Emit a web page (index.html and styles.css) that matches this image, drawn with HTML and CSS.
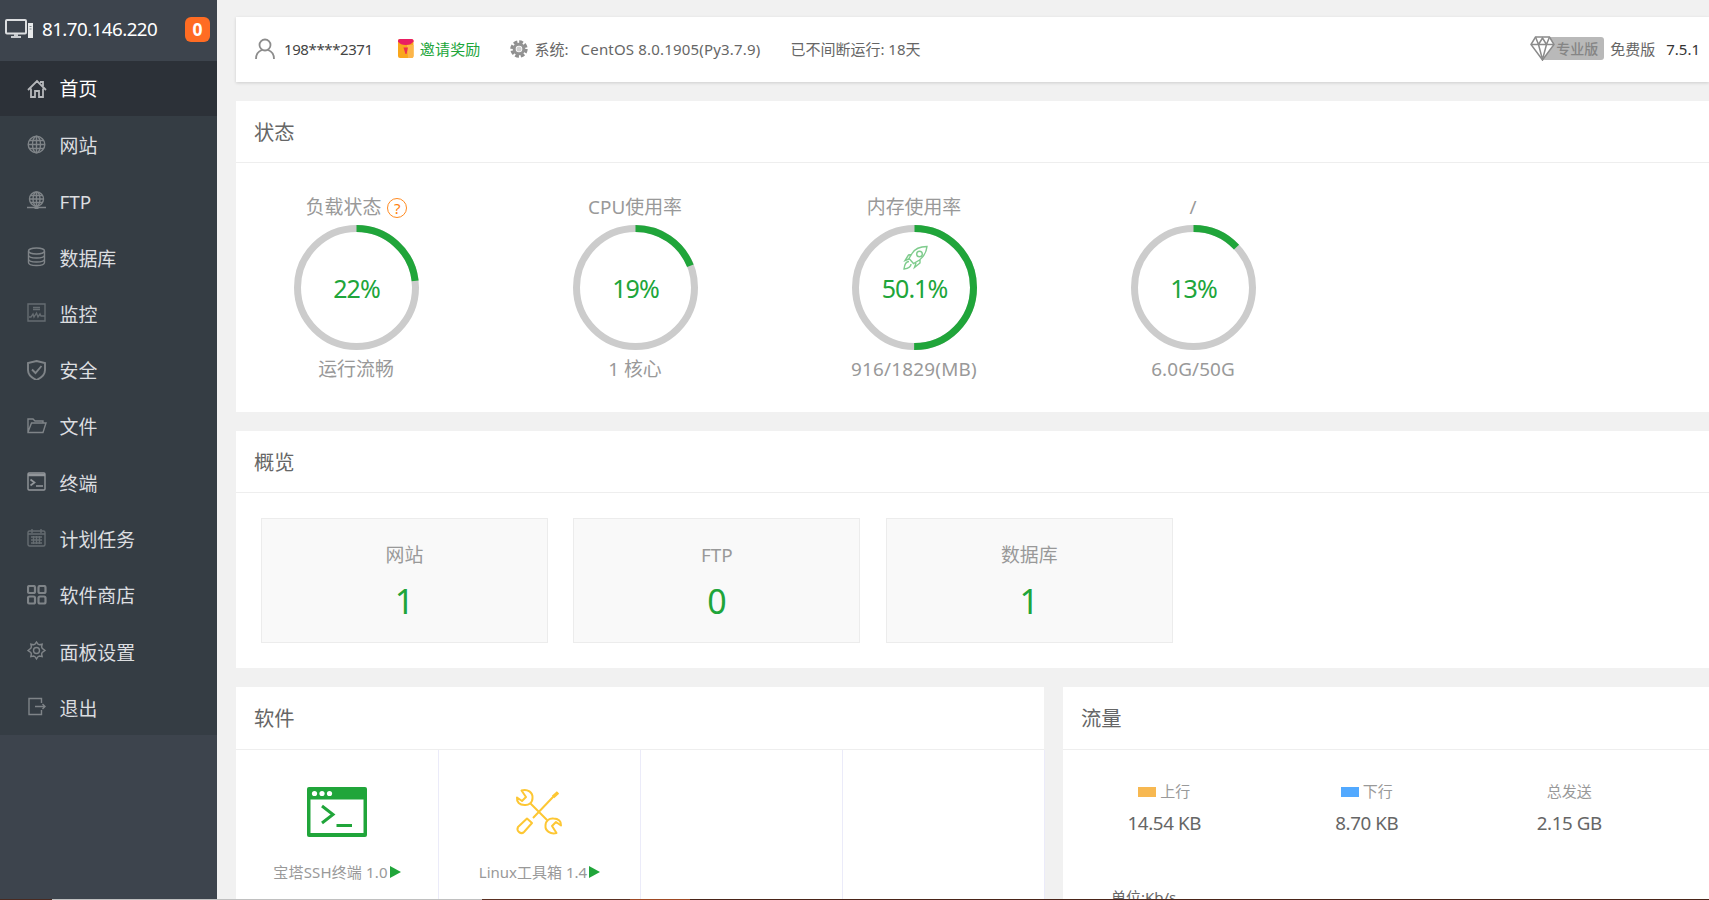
FILE: index.html
```html
<!DOCTYPE html>
<html lang="zh-CN">
<head>
<meta charset="utf-8">
<title>宝塔Linux面板</title>
<link rel="stylesheet" href="styles.css">
</head>
<body>
<div class="app">
  <aside class="sidebar">
    <header class="host">
      <svg class="host-icon" width="29" height="20" viewBox="0 0 29 20"><rect x="1" y="1" width="20" height="13.500" rx="1" fill="none" stroke="#dcdee0" stroke-width="2"/><path d="M9 15h4v2h3v2H6v-2h3z" fill="#c9cccf"/><path d="M23 4h5v15h-5z" fill="#e8eaeb"/><path d="M24.500 7.500h2M24.500 10h2" stroke="#7d848b"/></svg>
      <span class="host-ip">81.70.146.220</span>
      <span class="badge">0</span>
    </header>
    <nav class="menu">
      <a class="item active"><svg viewBox="0 0 20 20"><path d="M1 11 10 2l9 9M4 9.500V18h4v-6h4v6h4V9.500M13 3h3v4"/></svg>首页</a>
      <a class="item"><svg viewBox="0 0 20 20"><circle cx="9.500" cy="9.500" r="8.300"/><ellipse cx="9.500" cy="9.500" rx="4" ry="8.300"/><path d="M9.500 1v17M1 9.500h17M2.500 5.500h14M2.500 13.500h14"/></svg>网站</a>
      <a class="item"><svg viewBox="0 0 20 20"><circle cx="9.500" cy="8" r="7"/><ellipse cx="9.500" cy="8" rx="3.500" ry="7"/><path d="M9.500 1v16M2.500 8h14M3.500 4.500h12M3.500 11.500h12M0 16.500h19" /><path d="M7.500 16.500h4" stroke-width="3"/></svg>FTP</a>
      <a class="item"><svg viewBox="0 0 20 20"><ellipse cx="9.500" cy="4" rx="8" ry="3"/><path d="M1.500 4v11.500c0 4 16 4 16 0V4M1.500 8c0 4 16 4 16 0M1.500 12c0 4 16 4 16 0"/></svg>数据库</a>
      <a class="item dim"><svg viewBox="0 0 20 20"><path d="M1 1h17v17H1zM6 4.500h7M6 6.500h7M2 14h2l2-3 1 3 2.500-4 1.500 4 2-3 1 2h4"/></svg>监控</a>
      <a class="item"><svg viewBox="0 0 20 20"><path d="M9.500 1 18 3v7c0 5-4 8-8.500 10C5 18 1 15 1 10V3z" stroke-width="1.900"/><path d="m5 9.500 3.500 3.500 6-7" stroke-width="1.900"/></svg>安全</a>
      <a class="item"><svg viewBox="0 0 20 20"><path d="M1 16V3h5l2 2h8v2M1 16 4.500 7H19l-3 9.500H1z"/></svg>文件</a>
      <a class="item bright"><svg viewBox="0 0 20 20"><rect x="1" y="1" width="17" height="17" rx="1"/><path d="M1 3h17" stroke-width="2.500"/><path d="m3.500 7.500 4 3-4 3M9 14h7" stroke-width="1.700"/></svg>终端</a>
      <a class="item dim"><svg viewBox="0 0 20 20"><rect x="1" y="3" width="17" height="15" rx="1.500"/><path d="M5 1v4M14 1v4M1 6h17M4 9h11M4 12h11M4 15h11M6.500 8v8M9.500 8v8M12.500 8v8"/></svg>计划任务</a>
      <a class="item"><svg viewBox="0 0 20 20" class="thick"><rect x="1" y="1" width="7" height="7" rx="1.500"/><rect x="11.500" y="1" width="7" height="7" rx="1.500"/><rect x="1" y="11.500" width="7" height="7" rx="1.500"/><rect x="11.500" y="11.500" width="7" height="7" rx="1.500"/></svg>软件商店</a>
      <a class="item"><svg viewBox="0 0 20 20"><circle cx="9.500" cy="9.500" r="3"/><path d="M8 3.200 9.500 1 11 3.200l1.400.5 2.800-.6-.6 2.800.6 1.400 2.800 2.200-2.800 2-.6 1.400.6 2.800-2.800-.6-1.400.6L9.500 18 8 15.700l-1.400-.6-2.800.6.6-2.800-.6-1.400L1 9.500l2.800-2.200.6-1.400-.6-2.800 2.800.6z"/></svg>面板设置</a>
      <a class="item"><svg viewBox="0 0 20 20"><path d="M14.500 6V1.500H2v16h12.500V13M8 9.500h9.500M15.500 7l2.500 2.500-2.500 2.500"/></svg>退出</a>
    </nav>
  </aside>

  <main class="main">
    <section class="topbar">
      <svg class="i-user" width="20" height="22" viewBox="0 0 20 22"><circle cx="10" cy="7" r="5.500"/><path d="M1 21c0-5 3-8 6-9M19 21c0-5-3-8-6-9"/></svg>
      <span class="user">198****2371</span>
      <svg class="i-gift" width="16" height="19" viewBox="0 0 16 19"><rect width="15.500" height="19" rx="2" fill="#f9a61c"/><path d="M9 6h6.500v11a2 2 0 0 1-2 2H10z" fill="#fcb54a"/><path d="M0 1.500Q0 0 2 0h11.500q2 0 2 1.500v1Q13 6 7.700 6T0 2.500z" fill="#e91e63"/><path d="M5.500 8.500h4.500L8.500 15h-1z" fill="#ee2e4e"/></svg>
      <span class="invite">邀请奖励</span>
      <svg class="i-gear" width="18" height="18" viewBox="0 0 18 18"><circle cx="9" cy="9" r="7" fill="none" stroke="#8f8f8f" stroke-width="3.400" stroke-dasharray="3.700 1.798"/><circle cx="9" cy="9" r="4.800" fill="none" stroke="#939393" stroke-width="3"/><circle cx="9" cy="9" r="2.500" fill="#d0d0d0"/></svg>
      <span class="sys">系统:</span>
      <span class="os">CentOS 8.0.1905(Py3.7.9)</span>
      <span class="uptime">已不间断运行: 18天</span>
      <span class="pro"><svg width="25" height="25" viewBox="0 0 25 25"><path d="M5.500 1h14l4.500 7.500L12.500 24 1 8.500z" fill="#fff"/><path d="M1 8.500h23M5.500 1l3 7.500 4 15 4-15 3-7.500M8.500 8.500 12.500 2l4 6.500"/></svg><b>专业版</b></span>
      <span class="free">免费版</span>
      <span class="ver">7.5.1</span>
    </section>

    <section class="panel status">
      <h3>状态</h3>
      <div class="gauges">
        <div class="gauge"><p>负载状态<i class="help">?</i></p>
          <div class="ring"><svg viewBox="0 0 125 125"><circle cx="62.500" cy="62.500" r="59"/><circle class="val" cx="62.500" cy="62.500" r="59" pathLength="100" stroke-dasharray="23.200 100"/></svg><strong>22%</strong></div><p class="foot">运行流畅</p></div>
        <div class="gauge"><p>CPU使用率</p>
          <div class="ring"><svg viewBox="0 0 125 125"><circle cx="62.500" cy="62.500" r="59"/><circle class="val" cx="62.500" cy="62.500" r="59" pathLength="100" stroke-dasharray="19 100"/></svg><strong>19%</strong></div><p class="foot">1 核心</p></div>
        <div class="gauge"><p>内存使用率</p>
          <div class="ring"><svg viewBox="0 0 125 125"><circle cx="62.500" cy="62.500" r="59"/><circle class="val" cx="62.500" cy="62.500" r="59" pathLength="100" stroke-dasharray="50.100 100"/><g class="rocket"><path d="M75 21.500c-7 0-12 2-15 7l-3 5 4.500 5 6-3.500c5-4 7-8 7.500-13.500zM59.500 29.500l-3 .5-3.500 5.500 4-1.500M68 34.500v3.500l-5.500 4.500 1.500-4.500M57 36.500c-3 0-4.500 3-5 7.500 4.500-.5 7-2 7-5"/><circle cx="67.500" cy="29" r="2.800"/></g></svg><strong>50.1%</strong></div><p class="foot mem">916/1829(MB)</p></div>
        <div class="gauge"><p>/</p>
          <div class="ring"><svg viewBox="0 0 125 125"><circle cx="62.500" cy="62.500" r="59"/><circle class="val" cx="62.500" cy="62.500" r="59" pathLength="100" stroke-dasharray="13 100"/></svg><strong>13%</strong></div><p class="foot disk">6.0G/50G</p></div>
      </div>
    </section>

    <section class="panel overview">
      <h3>概览</h3>
      <div class="boxes">
        <div class="box"><p>网站</p><strong>1</strong></div>
        <div class="box"><p>FTP</p><strong>0</strong></div>
        <div class="box"><p>数据库</p><strong>1</strong></div>
      </div>
    </section>

    <div class="row">
      <section class="panel software">
        <h3>软件</h3>
        <div class="cells">
          <div class="cell"><svg width="60" height="50" viewBox="0 0 60 50"><rect width="60" height="50" rx="2" fill="#20a53a"/><path d="M3.500 12.500h53V46h-53z" fill="#fff"/><g fill="#fff"><circle cx="7.500" cy="6.500" r="2.600"/><circle cx="15" cy="6.500" r="2.600"/><circle cx="22.500" cy="6.500" r="2.600"/></g><path d="m15 19 11 8.500L15 36M29.500 38.500H45" fill="none" stroke="#20a53a" stroke-width="3"/></svg><p>宝塔SSH终端 1.0<i class="play"></i></p></div>
          <div class="cell"><svg class="tools" width="60" height="50" viewBox="0 0 60 50"><path d="M8 10.500 13 14l4-4-4.500-6.500c6-2 11.500 2 11 7.500 0 5-4 7.500-8 7-5 0-8-3-7.500-7.500zM52 38.500 47 35l-4 4 4.500 7c-6 1.500-11.500-2-11-7.500 0-5 4-7.500 8-7 5 0 8 3 7.500 7z"/><path d="M21.500 16.500 38 33M44 10 24 31M49 5.500l-5 4.500"/><path d="m44 10 5-4.500" stroke-width="3.500"/><path d="m18 31.500 5 4.500-8 9c-3 3-8-1-6-5z"/></svg><p class="tool">Linux工具箱 1.4<i class="play"></i></p></div>
          <div class="cell"></div>
          <div class="cell"></div>
        </div>
      </section>
      <section class="panel traffic">
        <h3>流量</h3>
        <div class="stats">
          <div class="stat"><p><i class="up"></i>上行</p><b>14.54 KB</b></div>
          <div class="stat"><p><i class="down"></i>下行</p><b>8.70 KB</b></div>
          <div class="stat"><p>总发送</p><b>2.15 GB</b></div>
        </div>
        <p class="unit">单位:Kb/s</p>
      </section>
    </div>
  </main>
</div>
<div class="edge"></div>
</body>
</html>
```
FILE: styles.css
```css
* { box-sizing: border-box; }
html, body { margin: 0; height: 900px; overflow: hidden; }
body { background: #f1f1f1; color: #666; font-family: "Noto Sans", "Noto Sans CJK SC", sans-serif; font-size: 15px; line-height: 1.2; }
p, h3 { margin: 0; font-weight: 400; }
i { font-style: normal; }
.app { display: flex; height: 900px; }

.sidebar { width: 217px; flex: none; background: #3d444d; }
.host { display: flex; align-items: center; height: 61px; padding: 0 7px 3px 5px; color: #fff; }
.host-icon { flex: none; }
.host-ip { margin-left: 8px; font-size: 18.75px; letter-spacing: -.55px; }
.badge { margin-left: auto; width: 25px; height: 25px; border-radius: 6px; background: #ff6c23; font-size: 17.5px; font-weight: 700; line-height: 24px; text-align: center; }
.menu { display: flex; flex-direction: column; height: 674px; background: #353d44; }
.item { flex: 1; display: flex; align-items: center; padding: 4px 0 0 26.5px; color: #dcdee0; font-size: 18.9px; line-height: 26px; }
.item svg { width: 20px; height: 20px; margin: 0 13px 3px 0; fill: none; stroke: #7f8488; stroke-width: 1.4; }
.item.active { flex: none; height: 55px; padding-top: 1px; background: #2c3138; color: #fff; }
.item.active svg { margin-bottom: 0; stroke: #b5b7ba; stroke-width: 1.8; }
.item.dim svg { stroke: #656c71; }
.item.bright svg { stroke: #92969a; }
.item svg.thick { stroke-width: 2.2; }

.main { flex: none; width: 1492px; padding: 17px 0 0 19px; overflow: hidden; }
.topbar { display: flex; align-items: center; height: 65px; padding: 0 9px 0 19px; background: #fff; box-shadow: 0 1px 3px rgba(0,0,0,.15); white-space: nowrap; }
.topbar span { padding-bottom: 2px; }
.topbar .pro { padding-bottom: 3px; }
.i-user, .i-gift { margin-bottom: 2px; }
.i-user { fill: none; stroke: #8c8c8c; stroke-width: 1.8; }
.user { margin-left: 9px; color: #444; letter-spacing: -.4px; }
.i-gift { margin-left: 25px; }
.invite { margin-left: 6px; color: #20a53a; letter-spacing: .2px; }
.i-gear { margin: 0 0 2px 29px; }
.sys { margin-left: 7px; }
.os { margin-left: 12px; letter-spacing: .18px; }
.uptime { margin-left: 30px; }
.pro { display: flex; align-items: center; margin-left: auto; }
.pro svg { position: relative; z-index: 1; fill: none; stroke: #8b8b8b; stroke-width: 1.5; }
.pro b { margin-left: -13px; width: 62px; height: 23px; padding-left: 14px; border-radius: 3px; background: #b9b9b9; color: #858585; font-size: 14px; font-weight: 500; line-height: 23px; }
.free { margin-left: 6px; }
.ver { margin-left: 11px; color: #333; }

.panel { background: #fff; }
.panel h3 { height: 62px; padding-left: 18px; border-bottom: 1px solid #eee; font-size: 20.3px; line-height: 63px; }
.status { height: 311px; margin-top: 19px; }
.gauges { display: grid; grid-template-columns: repeat(4, 168px); column-gap: 111px; padding: 31px 0 0 36px; }
.gauge { display: flex; flex-direction: column; align-items: center; color: #999; font-size: 18.9px; white-space: nowrap; }
.gauge p { display: flex; align-items: center; height: 26px; line-height: 26px; }
.help { width: 20px; height: 20px; margin: 2px -1px 0 6px; border: 1.25px solid #ff8a1f; border-radius: 50%; color: #ff7f0e; font-size: 15px; line-height: 18px; text-align: center; }
.ring { display: grid; place-items: center; width: 125px; height: 125px; margin-top: 5px; }
.ring > * { grid-area: 1 / 1; }
.ring svg { width: 125px; height: 125px; fill: none; stroke: #ccc; stroke-width: 7; }
.ring .val { stroke: #20a53a; transform: rotate(-90deg); transform-origin: 50% 50%; }
.ring .rocket { stroke: #7fcc8d; stroke-width: 1.4; }
.ring strong { padding-left: 1px; color: #20a53a; font-size: 25px; font-weight: 400; letter-spacing: -1px; }
.gauge .foot { margin-top: 6px; }
.foot.mem { letter-spacing: .2px; }
.foot.disk { letter-spacing: .1px; }

.overview { height: 237px; margin-top: 19px; }
.boxes { display: flex; gap: 25.4px; padding: 25px 0 0 25px; }
.box { width: 287px; height: 125px; border: 1px solid #ececec; background: #f9f9f9; padding-top: 23px; text-align: center; }
.box p { color: #999; font-size: 18.9px; line-height: 26px; }
.box strong { display: block; margin-top: 10px; color: #20a53a; font: 400 34px/46px "Noto Sans", sans-serif; }

.row { display: flex; gap: 19px; margin-top: 19px; }
.row h3 { height: 63px; }
.software { flex: none; width: 808px; height: 213px; }
.cells { display: flex; width: 809px; }
.cell { display: flex; flex-direction: column; align-items: center; width: 202px; height: 150px; padding-top: 37px; border-right: 1px solid #ebebf9; color: #999; }
.cell:first-child { width: 203px; }
.cell p { display: flex; align-items: center; margin-top: 24px; line-height: 22px; white-space: nowrap; letter-spacing: .15px; }
.cell .tool { letter-spacing: 0; }
.tools { margin-left: -1px; fill: none; stroke: #fdc734; stroke-width: 2; stroke-linejoin: round; }
.play { margin-left: 2px; border-left: 11px solid #20a53a; border-top: 6.5px solid transparent; border-bottom: 6.5px solid transparent; }
.traffic { flex: none; width: 664px; height: 213px; }
.stats { display: flex; padding-top: 30px; }
.stat { width: 202.5px; text-align: center; }
.stat p { color: #999; line-height: 22px; }
.stat i { display: inline-block; width: 18px; height: 10px; margin-right: 4px; background: #f7b851; }
.stat i.down { background: #52a9ff; }
.stat b { display: block; margin-top: 8px; font-size: 18.75px; font-weight: 400; line-height: 26px; letter-spacing: -.4px; }
.unit { margin: 50px 0 0 48px; line-height: 22px; }

/* strip along the bottom of the window */
.edge { position: absolute; left: 0; right: 0; bottom: 0; height: 1px; background: linear-gradient(90deg, #4a2a20 52px, #c0c0c0 52px 482px, #5a3022 482px 630px, #a04a24 630px 690px, #4a2418 690px); }
```
